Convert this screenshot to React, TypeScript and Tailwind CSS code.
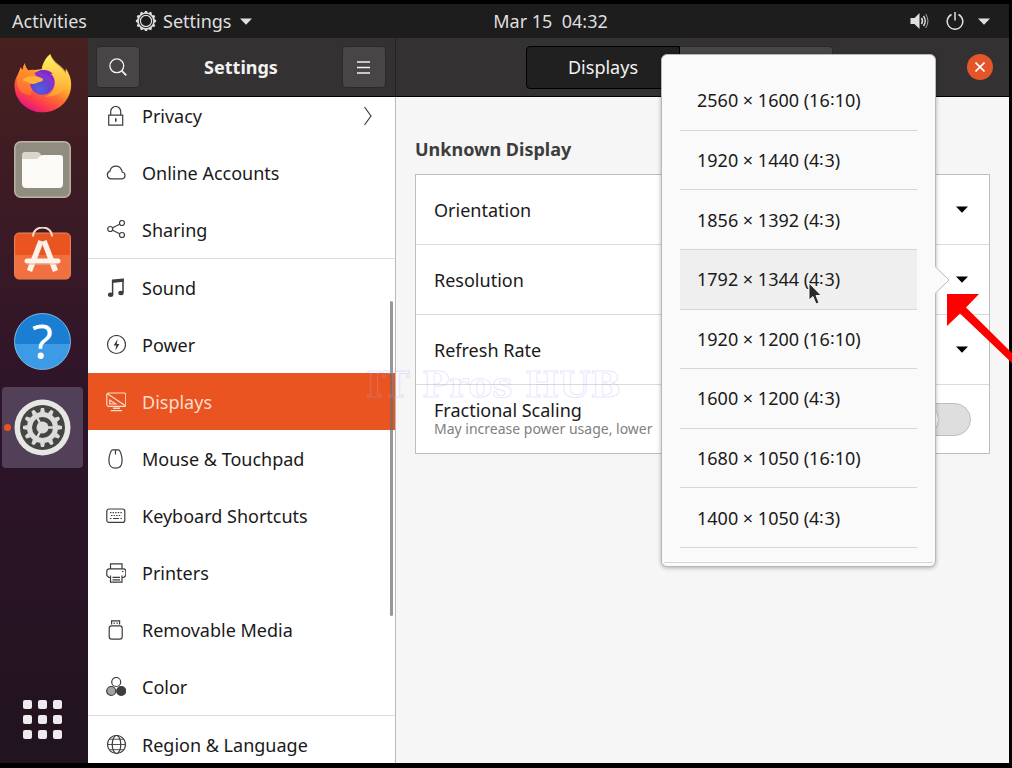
import React, { useState } from 'react';
import { clsx } from 'clsx';

const TEETH = [0, 30, 60, 90, 120, 150, 180, 210, 240, 270, 300, 330];

interface LineIconProps {
  children: React.ReactNode;
}

function LineIcon({ children }: LineIconProps) {
  return (
    <svg viewBox="0 0 20 20" className="w-5 h-5 shrink-0" fill="none" stroke="currentColor" strokeWidth="1.2" aria-hidden="true">
      {children}
    </svg>
  );
}

const icons = {
  privacy: (
    <LineIcon>
      <path d="M2.7 9.2h14v10h-14zM4.7 9V5.5a5 5 0 0 1 10 0V9" />
      <path d="M9 12.2h1.6v3.6H9z" fill="currentColor" stroke="none" />
    </LineIcon>
  ),
  accounts: (
    <LineIcon>
      <path d="M4.6 15.8a4 4 0 0 1-.6-7.700 6 6 0 0 1 11.400-1.400c.5.7.6 1.400.7 2.300a3.500 3.500 0 0 1 .4 6.800z" />
    </LineIcon>
  ),
  sharing: (
    <LineIcon>
      <circle cx="4.2" cy="9" r="2.5" />
      <circle cx="16" cy="3" r="2.5" />
      <circle cx="16" cy="15" r="2.5" />
      <path d="M6.600 7.800l7-3.600M6.600 10.200l7 3.600" />
    </LineIcon>
  ),
  sound: (
    <LineIcon>
      <path d="M6.6 16.5V2.2M17 14.6V.8" strokeWidth="1.5" />
      <path d="M6 1.500L17.700.4v3.400L6 5z" fill="currentColor" stroke="none" />
      <ellipse cx="4.6" cy="16.8" rx="2.7" ry="2.2" fill="currentColor" stroke="none" />
      <ellipse cx="15" cy="15" rx="2.7" ry="2.2" fill="currentColor" stroke="none" />
    </LineIcon>
  ),
  power: (
    <LineIcon>
      <circle cx="10.5" cy="9.500" r="9" />
      <path d="M11.600 4L7.600 10.500h2.600l-.8 5 4-6.600h-2.600z" fill="currentColor" stroke="none" />
    </LineIcon>
  ),
  displays: (
    <LineIcon>
      <rect x=".8" y="1" width="19" height="13.400" rx="1.800" />
      <path d="M1.500 1.800l17.500 11.800M3.800 8v4h6z" />
      <path d="M7 16.200h7M4.800 18.600h11.200" strokeWidth="1.400" />
    </LineIcon>
  ),
  mouse: (
    <LineIcon>
      <path d="M6.500.8h6c1.500 0 3.600 6 3.600 10.600 0 4.700-2.400 7.800-6.600 7.800s-6.600-3.100-6.600-7.800C2.900 6.800 5 .8 6.500.8zM9.500 1v4.600" />
    </LineIcon>
  ),
  keyboard: (
    <LineIcon>
      <rect x=".8" y="3" width="18" height="13.400" rx="2.200" />
      <path d="M4 6.600h12.500M5 9.500h10.500" strokeDasharray="1.400 1.200" />
      <path d="M4 12.500h1.500M7 12.500h6M14.500 12.500h1.500" />
    </LineIcon>
  ),
  printers: (
    <LineIcon>
      <path d="M4.500 5.800V.8h11.500v5M4.500 14.500H2.800L.8 12.500V8.300c0-1.500 1-2.500 2.500-2.500h14c1.500 0 2.500 1 2.500 2.500v4.200l-2 2H16M4.500 12.400v6.800H16v-6.800M6.500 14.400h7.500M6.500 16.800h7.500" />
      <path d="M16 8.500h1.500" />
    </LineIcon>
  ),
  media: (
    <LineIcon>
      <rect x="3.200" y="5.800" width="13" height="13.400" rx="2.400" />
      <path d="M5.600 4.500V.8h8v3.700" />
      <path d="M7.500 3.200h1.400M10.400 3.200h1.400" />
    </LineIcon>
  ),
  color: (
    <LineIcon>
      <circle cx="10.200" cy="5" r="4.500" />
      <circle cx="5.200" cy="14" r="4.500" fill="#a3a3a3" />
      <circle cx="15.200" cy="14" r="4.500" fill="#3d3d3d" />
    </LineIcon>
  ),
  region: (
    <LineIcon>
      <circle cx="10.500" cy="9.500" r="9" />
      <ellipse cx="10.500" cy="9.500" rx="4.300" ry="9" />
      <path d="M1.500 9.500h18M3.500 4.200h14M3.500 14.700h14" strokeWidth=".9" />
    </LineIcon>
  ),
};

interface NavItem {
  id: keyof typeof icons;
  label: string;
  hasChildren?: boolean;
}

const navGroups: NavItem[][] = [
  [
    { id: 'privacy', label: 'Privacy', hasChildren: true },
    { id: 'accounts', label: 'Online Accounts' },
    { id: 'sharing', label: 'Sharing' },
  ],
  [
    { id: 'sound', label: 'Sound' },
    { id: 'power', label: 'Power' },
    { id: 'displays', label: 'Displays' },
    { id: 'mouse', label: 'Mouse & Touchpad' },
    { id: 'keyboard', label: 'Keyboard Shortcuts' },
    { id: 'printers', label: 'Printers' },
    { id: 'media', label: 'Removable Media' },
    { id: 'color', label: 'Color' },
  ],
  [{ id: 'region', label: 'Region & Language' }],
];

const resolutions = [
  '2560 × 1600 (16∶10)',
  '1920 × 1440 (4∶3)',
  '1856 × 1392 (4∶3)',
  '1792 × 1344 (4∶3)',
  '1920 × 1200 (16∶10)',
  '1600 × 1200 (4∶3)',
  '1680 × 1050 (16∶10)',
  '1400 × 1050 (4∶3)',
];

function Caret() {
  return (
    <svg viewBox="0 0 12 7" className="w-3 h-[7px] shrink-0" aria-hidden="true">
      <path d="M0 .5h12L6 6.800z" fill="currentColor" />
    </svg>
  );
}

function FirefoxIcon() {
  return (
    <svg viewBox="43 38 174 178" className="w-[58px] h-[59px]" aria-hidden="true">
      <defs>
        <linearGradient id="ffBody" x1="0.8" y1="0.1" x2="0.3" y2="1">
          <stop offset="0" stopColor="#fff04a" />
          <stop offset="0.35" stopColor="#ffb62c" />
          <stop offset="0.6" stopColor="#ff6a33" />
          <stop offset="0.82" stopColor="#fb3750" />
          <stop offset="1" stopColor="#e0128a" />
        </linearGradient>
        <radialGradient id="ffGlobe" cx="0.4" cy="0.75" r="0.75">
          <stop offset="0" stopColor="#4a62dc" />
          <stop offset="0.5" stopColor="#6a3fd2" />
          <stop offset="1" stopColor="#9a2ad0" />
        </radialGradient>
        <linearGradient id="ffFlame" x1="0.5" y1="0" x2="0.6" y2="1">
          <stop offset="0" stopColor="#fff36b" />
          <stop offset="1" stopColor="#ffa436" />
        </linearGradient>
        <linearGradient id="ffHead" x1="0.5" y1="0" x2="0.4" y2="1">
          <stop offset="0" stopColor="#ff9c2a" />
          <stop offset="1" stopColor="#ff6a33" />
        </linearGradient>
      </defs>
      <path d="M75 66c-4 8-6 14-5 21l-8-8c-1 9-5 14-8 21-6 10-10 20-10 32 0 46 38 82 85 82s86-36 86-84c0-19-6-34-17-45l1 14c-8-16-21-23-32-33-8-8-12-16-15-27-12 8-21 25-25 44l-22 3c-9 0-15 1-19 2-6-6-10-13-11-22z" fill="url(#ffBody)" />
      <path d="M152 39c-14 10-24 28-26 46 20 2 36 14 40 34 4 24-10 42-30 48 40 2 70-20 72-60 0-10-3-18-9-26l1 14c-8-16-21-23-32-33-7-8-13-14-16-23z" fill="url(#ffFlame)" opacity=".75" />
      <circle cx="128" cy="124" r="37" fill="url(#ffGlobe)" />
      <path d="M116 90c14-7 34-5 44 8l-10-1c10 8 15 18 14 30-6-20-22-30-48-37z" fill="#8526c6" />
      <path d="M75 66C71 74 69 80 70 87L62 79C58 96 50 106 52 124C53 146 66 160 92 162L97 146C91 138 89 130 93 127C106 132 112 122 124 121C130 119 131 113 127 111L112 106C105 100 103 95 105 86C96 85 90 87 86 88C80 82 76 75 75 66z" fill="url(#ffHead)" />
      <path d="M68 118C78 104 94 104 112 106L127 111C131 114 130 119 124 121C112 122 106 132 93 127C84 124 76 120 68 118z" fill="#ffb13c" />
    </svg>
  );
}

function FilesIcon() {
  return (
    <svg viewBox="0 0 57 57" className="w-[57px] h-[57px]" aria-hidden="true">
      <rect x=".8" y=".8" width="55.400" height="55.400" rx="6" fill="#918c80" stroke="#b9b4a6" strokeWidth="1.500" />
      <path d="M8 14c0-2 1-3 3-3h12c2 0 3 1 4 3v8H8z" fill="#dad6cb" />
      <path d="M8 18h14c3 0 3-4 7-4h17c2 0 3 1 3 3v26c0 2-1 4-4 4H12c-3 0-4-2-4-4z" fill="#fbfaf7" />
    </svg>
  );
}

function SoftwareIcon() {
  return (
    <svg viewBox="0 3 57 57" className="w-[57px] h-[57px]" aria-hidden="true">
      <rect x=".6" y="9" width="55.800" height="46" rx="4.500" fill="#e95420" stroke="#ef8a62" />
      <path d="M1 31h55v20q0 4-4 4H5q-4 0-4-4z" fill="#f0713f" />
      <path d="M19 12.500C19 .5 38 .5 38 12.500" fill="none" stroke="#f6d9c8" strokeWidth="2" />
      <g stroke="#fdf1e9" fill="none">
        <line x1="27" y1="17" x2="15.500" y2="47" strokeWidth="5.500" />
        <line x1="30" y1="17" x2="41.500" y2="47" strokeWidth="5.500" />
        <line x1="13" y1="37" x2="44" y2="37" strokeWidth="5" strokeLinecap="round" />
      </g>
      <line x1="13" y1="40" x2="44" y2="40" stroke="#d9b5a2" />
    </svg>
  );
}

function GearIcon() {
  return (
    <svg viewBox="0 0 57 57" className="w-[57px] h-[57px]" aria-hidden="true">
      <circle cx="28.500" cy="28.500" r="28" fill="#e6e6e4" />
      <circle cx="28.500" cy="28.500" r="22.500" fill="#454543" />
      <g fill="#dcdcda">
        {TEETH.map((deg) => (
          <path key={deg} d="M26 13.500l1-4.500h3l1 4.500z" transform={`rotate(${deg} 28.500 28.500)`} />
        ))}
      </g>
      <circle cx="28.500" cy="28.500" r="13" fill="none" stroke="#dcdcda" strokeWidth="5" />
      <circle cx="28.500" cy="28.500" r="6" fill="#dcdcda" />
      <path d="M28.500 28.500h12M28.500 28.500l-6-11M28.500 28.500l-6 11" stroke="#dcdcda" strokeWidth="2.500" />
    </svg>
  );
}

function TopBar() {
  return (
    <div className="h-[34px] shrink-0 flex items-center bg-[#1d1d1d] text-[#dfdfdf] pl-3 pr-[19px]">
      <button className="whitespace-nowrap">Activities</button>
      <button className="flex items-center whitespace-nowrap ml-12">
        <svg viewBox="0 0 22 22" className="w-[22px] h-[22px] mr-1.5" fill="none" stroke="currentColor" aria-hidden="true">
          <circle cx="11" cy="11" r="8" strokeWidth="1.600" />
          <circle cx="11" cy="11" r="5.600" strokeWidth="1.200" />
          <g fill="currentColor" stroke="none">
            {TEETH.map((deg) => (
              <path key={deg} d="M9.300 3L10 .9h2l.7 2.100z" transform={`rotate(${deg} 11 11)`} />
            ))}
          </g>
        </svg>
        Settings
        <span className="ml-2"><Caret /></span>
      </button>
      <div className="flex-[4]" />
      <button className="whitespace-pre">Mar 15  04:32</button>
      <div className="flex-[5]" />
      <button aria-label="System menu" className="flex items-center">
        <svg viewBox="0 0 20 18" className="w-5 h-[18px] mr-4" fill="none" stroke="currentColor" aria-hidden="true">
          <path d="M.5 6h4L9.500 1v16l-5-5h-4z" fill="currentColor" stroke="none" />
          <path d="M11.500 6q2 3 0 6" strokeWidth="1.500" />
          <path d="M13.500 4q3.500 5 0 10" strokeWidth="1.400" />
          <path d="M15.700 2q4.500 7 0 14" strokeWidth="1" opacity=".7" />
        </svg>
        <svg viewBox="0 0 18 18" className="w-[18px] h-[18px] mr-3.5" fill="none" stroke="currentColor" strokeWidth="1.500" aria-hidden="true">
          <path d="M5.500 2.500a7.800 7.800 0 1 0 7 0M9 0v8.500" />
        </svg>
        <Caret />
      </button>
    </div>
  );
}

function Dock() {
  return (
    <nav
      aria-label="Dock"
      className="w-[88px] shrink-0 flex flex-col items-start gap-[5px] pt-[5px] pb-[3px] pl-0.5 bg-linear-to-b from-[#48201f] via-[#2e1429] to-[#21131f]"
    >
      <button aria-label="Firefox" className="w-[81px] h-[81px] flex items-center justify-center">
        <FirefoxIcon />
      </button>
      <button aria-label="Files" className="w-[81px] h-[81px] flex items-center justify-center">
        <FilesIcon />
      </button>
      <button aria-label="Ubuntu Software" className="w-[81px] h-[81px] flex items-center justify-center">
        <SoftwareIcon />
      </button>
      <button aria-label="Help" className="w-[81px] h-[81px] flex items-center justify-center">
        <span className="w-[57px] h-[57px] rounded-full border border-[#7db9ea] bg-linear-to-b from-[#1a7fd2] from-55% to-[#3d9ae4] to-55% text-white text-5xl leading-[54px] text-center">
          ?
        </span>
      </button>
      <button aria-label="Settings" className="relative w-[81px] h-[81px] rounded bg-[#524058] flex items-center justify-center">
        <span className="absolute left-0.5 w-[7px] h-[7px] rounded-full bg-[#e95420]" />
        <GearIcon />
      </button>
      <button aria-label="Show Applications" className="w-[81px] h-[81px] mt-auto flex items-center justify-center">
        <span className="grid grid-cols-3 gap-[6px]">
          {Array.from({ length: 9 }, (_, i) => (
            <span key={i} className="w-[9px] h-[9px] rounded-xs bg-[#eeebee]" />
          ))}
        </span>
      </button>
    </nav>
  );
}

function Header() {
  return (
    <header className="h-[59px] shrink-0 flex bg-[#333132] text-[#f2f2f2] border-b border-black">
      <div className="w-[308px] shrink-0 flex items-center justify-between pl-2 pr-[9px] border-r border-[#232323]">
        <button aria-label="Search" className="w-11 h-[42px] rounded bg-[#474546] border border-[#2b292a] flex items-center justify-center">
          <svg viewBox="0 0 18 18" className="w-[18px] h-[18px]" fill="none" stroke="currentColor" strokeWidth="1.300" aria-hidden="true">
            <circle cx="7.800" cy="7.800" r="6.900" />
            <path d="M12.800 12.800l4.500 4.500" strokeWidth="1.800" />
          </svg>
        </button>
        <h1 className="font-bold">Settings</h1>
        <button aria-label="Menu" className="w-11 h-[42px] rounded bg-[#474546] border border-[#2b292a] flex items-center justify-center">
          <svg viewBox="0 0 13 13" className="w-[13px] h-[13px]" stroke="currentColor" strokeWidth="1.400" aria-hidden="true">
            <path d="M0 1h13M0 6.500h13M0 12h13" />
          </svg>
        </button>
      </div>
      <div className="flex-1 flex items-center justify-center">
        <button className="w-[154px] h-[43px] rounded-l bg-[#202020] border border-black">Displays</button>
        <button aria-label="Night Light" className="w-[153px] h-[43px] rounded-r bg-[#474546] border border-l-0 border-[#2b292a]" />
      </div>
      <button aria-label="Close" className="self-center w-[26px] h-[26px] mr-4 ml-1 rounded-full bg-[#e4562a] flex items-center justify-center">
        <svg viewBox="0 0 10 10" className="w-2.5 h-2.5" stroke="white" strokeWidth="1.600" aria-hidden="true">
          <path d="M.5.5l9 9M9.500.5l-9 9" />
        </svg>
      </button>
    </header>
  );
}

function Sidebar() {
  const [active, setActive] = useState('displays');

  return (
    <aside className="relative w-[308px] shrink-0 overflow-hidden bg-white border-r border-[#b9b9b9]">
      <div className="-mt-2.5">
        {navGroups.map((group, index) => (
          <ul key={index} className={clsx(index > 0 && 'border-t border-[#dcdcdc]')}>
            {group.map((item) => (
              <li key={item.id}>
                <button
                  onClick={() => setActive(item.id)}
                  className={clsx(
                    'w-full h-[57px] flex items-center gap-4 pl-[18px] pr-[22px] text-left',
                    active === item.id ? 'bg-[#e95420] text-[#fbdccd]' : 'text-[#3d3d3d]'
                  )}
                >
                  {icons[item.id]}
                  <span className={clsx('flex-1', active !== item.id && 'text-[#1a1a1a]')}>{item.label}</span>
                  {item.hasChildren && (
                    <svg viewBox="0 0 10 20" className="w-2.5 h-5" fill="none" stroke="currentColor" strokeWidth="1.200" aria-hidden="true">
                      <path d="M1.500 1L8 10l-6.500 9" />
                    </svg>
                  )}
                </button>
              </li>
            ))}
          </ul>
        ))}
      </div>
      {/* overlay scrollbar */}
      <div className="absolute right-0.5 top-[204px] w-[3px] h-[315px] rounded-full bg-[#6b6b6b]/70" />
    </aside>
  );
}

interface DisplayRowProps {
  label: string;
}

function DisplayRow({ label }: DisplayRowProps) {
  return (
    <button className="w-full h-[70px] px-[18px] flex items-center justify-between border-b border-[#dadada] text-left">
      <span>{label}</span>
      <span className="mr-[3px] text-black"><Caret /></span>
    </button>
  );
}

function DisplaysPanel() {
  return (
    <main className="flex-1 min-w-0 bg-[#f6f6f6] px-[19px] pt-10">
      <h2 className="font-bold text-[#3d3d3d] leading-6 mb-[13px]">Unknown Display</h2>
      <div className="bg-white border border-[#bdbdbd] text-[#1a1a1a]">
        <DisplayRow label="Orientation" />
        <DisplayRow label="Resolution" />
        <DisplayRow label="Refresh Rate" />
        <div className="h-[68px] px-[18px] flex items-center justify-between">
          <label htmlFor="fractional" className="min-w-0">
            <span className="block leading-5">Fractional Scaling</span>
            <span className="block text-sm leading-[18px] text-[#808080] truncate">May increase power usage, lower</span>
          </label>
          <input
            id="fractional"
            type="checkbox"
            role="switch"
            className="appearance-none shrink-0 w-16 h-[33px] rounded-full border border-[#bdbdbd] bg-[#dedede] before:block before:w-[31px] before:h-[31px] before:rounded-full before:bg-white before:border before:border-[#bdbdbd] checked:before:ml-auto"
          />
        </div>
      </div>
    </main>
  );
}

function ResolutionPopover() {
  const [hovered, setHovered] = useState(3);

  return (
    <div className="absolute top-4 right-[73px] z-10 w-[275px] h-[513px] px-[18px] pt-4 rounded-md border border-[#b8b8b8] bg-[#fafafa] shadow-[0_1px_4px_rgba(0,0,0,0.3)] text-[#1a1a1a]">
      <ul className="h-[477px] grid auto-rows-fr">
        {resolutions.map((resolution, index) => (
          <li key={resolution} className="border-b border-[#d6d6d6]">
            <button
              onMouseEnter={() => setHovered(index)}
              className={clsx('w-full h-full pl-[17px] text-left', hovered === index && 'bg-[#efefef]')}
            >
              {resolution}
            </button>
          </li>
        ))}
      </ul>
      <div className="-mx-4 mt-3.5 border-t border-[#d6d6d6]" />
      <svg viewBox="0 0 15 28" className="absolute -right-[15px] top-[211px] w-[15px] h-7" aria-hidden="true">
        <path d="M0 0L14 14 0 28z" fill="#fafafa" />
        <path d="M0 .5L14 14 0 27.500" fill="none" stroke="#b8b8b8" />
      </svg>
      {/* mouse pointer */}
      <svg viewBox="0 0 14 24" className="absolute left-[146px] top-[227px] w-3.5 h-6" aria-hidden="true">
        <path d="M1 1v17l4-3.500 3 7.500 3-1.300-3-7.200h5.200z" fill="#2b2b2b" stroke="white" strokeWidth=".9" />
      </svg>
    </div>
  );
}

export default function App() {
  return (
    <div className="relative h-screen flex flex-col overflow-hidden bg-black pt-1 pb-[5px] pr-[3px] font-['Noto_Sans',sans-serif] text-lg leading-6">
      <TopBar />
      <div className="flex-1 min-h-0 flex">
        <Dock />
        <div className="relative flex-1 min-w-0 flex flex-col">
          <Header />
          <div className="flex-1 min-h-0 flex">
            <Sidebar />
            <DisplaysPanel />
          </div>
          <div
            className="absolute left-[278px] top-[334px] h-6 whitespace-nowrap pointer-events-none font-['DejaVu_Serif',serif] font-bold text-[36px] leading-6 text-transparent [-webkit-text-stroke:1px_rgba(170,170,255,0.3)]"
          >
            IT Pros HUB
          </div>
          <ResolutionPopover />
        </div>
      </div>
      <svg viewBox="0 0 66 70" className="absolute right-0 top-[294px] z-20 w-[66px] h-[70px]" aria-hidden="true">
        <path d="M1 0h32L20 13.500 66 59v10L14 19.500 1 32z" fill="#ff0000" />
      </svg>
    </div>
  );
}
